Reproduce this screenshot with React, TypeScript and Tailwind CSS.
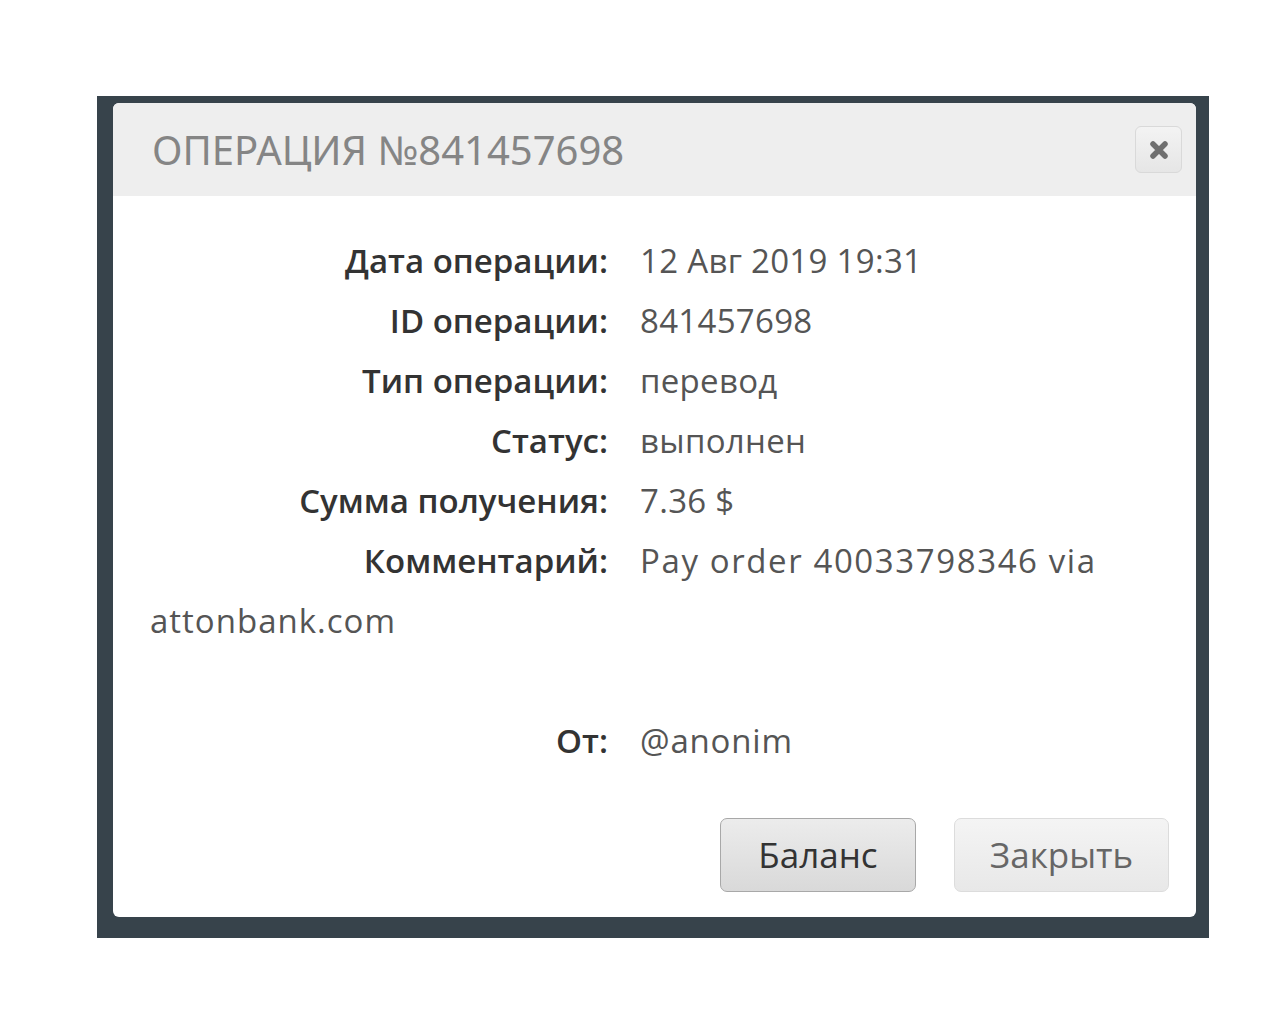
const rows: [string, string][] = [
  ["Дата операции:", "12 Авг 2019 19:31"],
  ["ID операции:", "841457698"],
  ["Тип операции:", "перевод"],
  ["Статус:", "выполнен"],
  ["Сумма получения:", "7.36 $"],
  ["Комментарий:", "Pay order 40033798346 via"],
]

function Label({ children }: { children: string }) {
  return (
    <span className="inline-block w-[490px] pr-[32px] text-right font-semibold text-[#333] tracking-[0px]">{children}</span>
  )
}

export default function App() {
  return (
    <div className="min-h-[1024px] bg-white pt-[96px] pl-[97px]" style={{ fontFamily: '"Open Sans", "Noto Sans", sans-serif' }}>
      <div className="w-[1112px] h-[842px] bg-[#37434b] pt-[7px] pl-[16px] pr-[13px] pb-[21px]">
        <div className="w-full h-full bg-white rounded-[6px] overflow-hidden flex flex-col">
          <div className="h-[93px] bg-[#eeeeee] flex items-center justify-between pl-[39px] pr-[14px]">
            <h1 className="text-[40px] font-normal text-[#858585] leading-none" style={{ fontFamily: '"Noto Sans", sans-serif' }}>
              ОПЕРАЦИЯ №841457698
            </h1>
            <button className="w-[47px] h-[47px] rounded-[6px] border border-[#d9d9d9] bg-gradient-to-b from-[#f3f3f3] to-[#e6e6e6] flex items-center justify-center">
              <svg width="22" height="22" viewBox="0 0 22 22">
                <path d="M5 5 L17 17 M17 5 L5 17" stroke="#6f6f6f" strokeWidth="5.5" strokeLinecap="round" />
              </svg>
            </button>
          </div>
          <div className="flex-1 pl-[37px] pr-[27px] pt-[35px] text-[33px] tracking-[0.3px] leading-[60px] text-[#555]">
            {rows.map(([label, value]) => (
              <div key={label} className="whitespace-nowrap">
                <Label>{label}</Label>
                <span className={label === "Комментарий:" ? "tracking-[1.6px]" : ""}>{value}</span>
              </div>
            ))}
            <div className="tracking-[1px]">attonbank.com</div>
            <div className="h-[60px]" />
            <div>
              <Label>От:</Label>
              <span className="tracking-[0.8px]">@anonim</span>
            </div>
            <div className="flex justify-end gap-[38px] mt-[47px]">
              <button className="w-[196px] h-[74px] rounded-[7px] border border-[#a8a8a8] bg-gradient-to-b from-[#ececec] to-[#d9d9d9] text-[35px] tracking-normal text-[#333]">
                Баланс
              </button>
              <button className="w-[215px] h-[74px] rounded-[7px] border border-[#dcdcdc] bg-gradient-to-b from-[#f4f4f4] to-[#e8e8e8] text-[35px] tracking-normal text-[#666]">
                Закрыть
              </button>
            </div>
          </div>
        </div>
      </div>
    </div>
  )
}
